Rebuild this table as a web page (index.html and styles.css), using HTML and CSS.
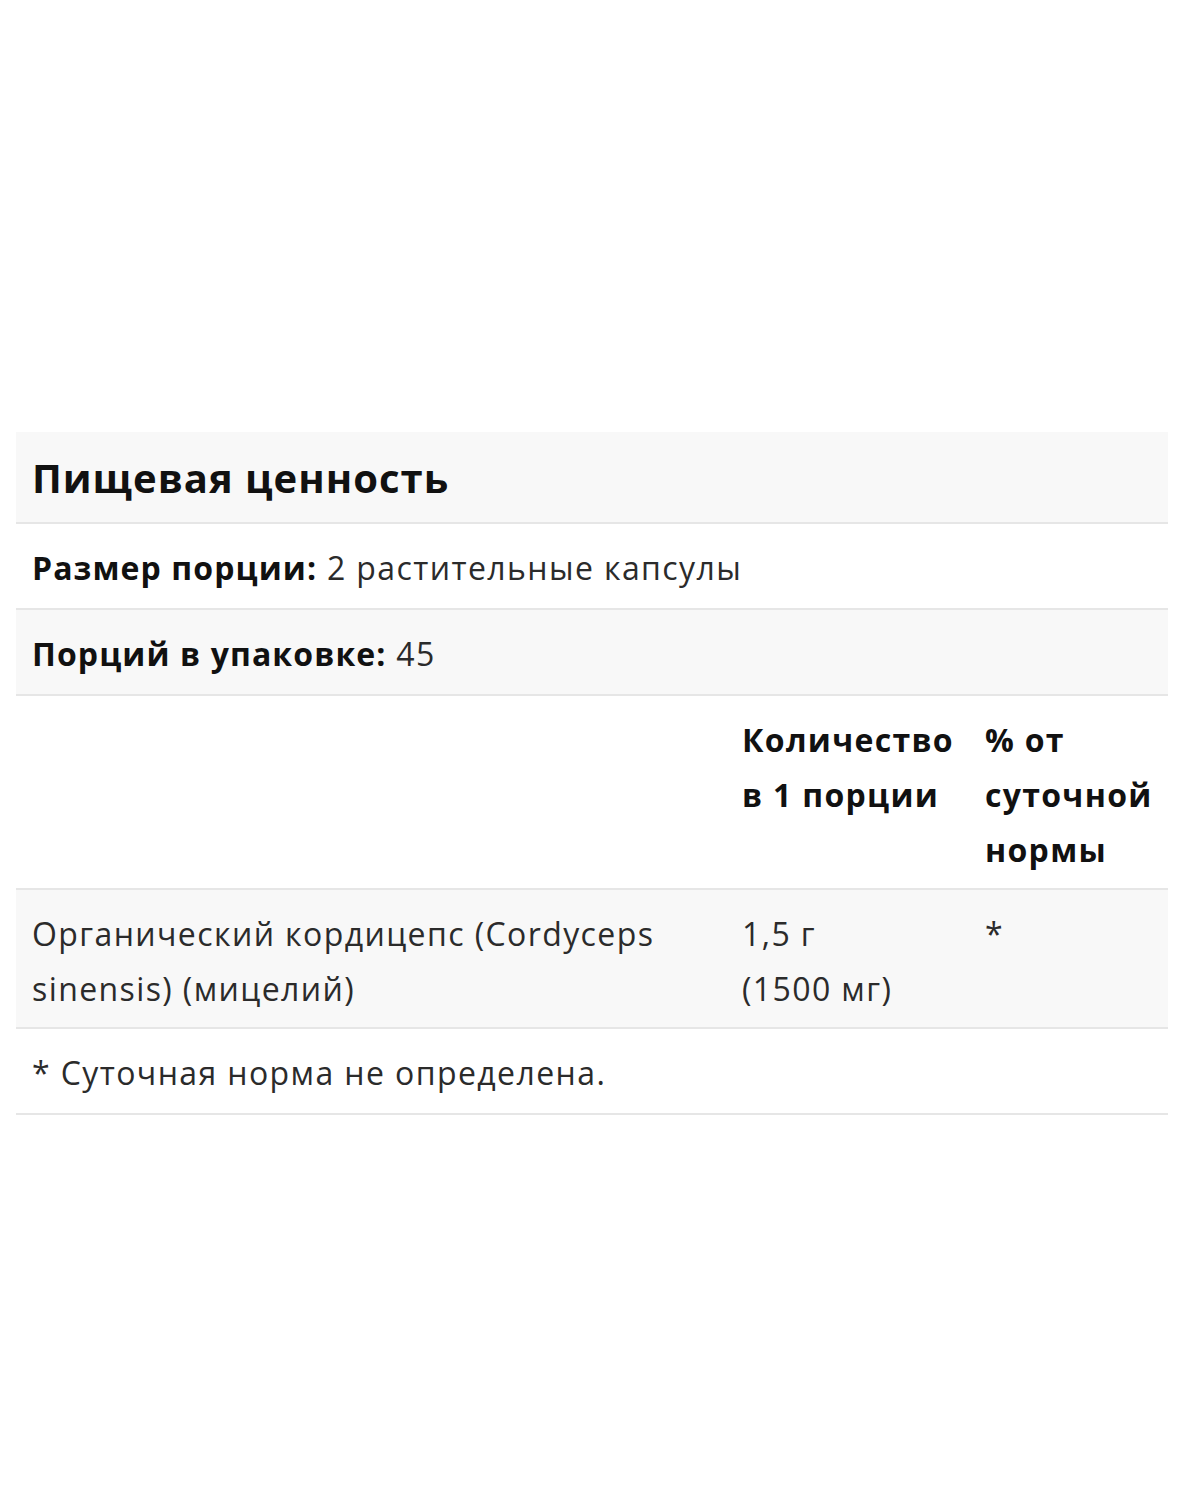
FILE: index.html
```html
<!DOCTYPE html>
<html lang="ru">
<head>
<meta charset="utf-8">
<link rel="stylesheet" href="styles.css">
</head>
<body>
<div class="facts">
  <div class="row title-row"><h2 class="title">Пищевая ценность</h2></div>
  <div class="row plain"><p><b>Размер порции:</b> 2 растительные капсулы</p></div>
  <div class="row shade"><p><b>Порций в упаковке:</b> 45</p></div>
  <div class="row grid plain head">
    <div class="c1"></div>
    <div class="c2">Количество в&nbsp;1 порции</div>
    <div class="c3">% от суточной нормы</div>
  </div>
  <div class="row grid shade">
    <div class="c1">Органический кордицепс (Cordyceps sinensis) (мицелий)</div>
    <div class="c2">1,5 г<br>(1500 мг)</div>
    <div class="c3">*</div>
  </div>
  <div class="row plain"><p>* Суточная норма не определена.</p></div>
</div>
</body>
</html>
```

FILE: styles.css
```css
html, body {
  margin: 0;
  padding: 0;
  background: #ffffff;
}
body {
  font-family: "Open Sans", "Noto Sans", sans-serif;
  color: #2b2b2b;
  font-size: 32px;
  line-height: 55px;
  letter-spacing: 1.4px;
}
.facts {
  margin: 432px 0 0 16px;
  width: 1152px;
}
.row {
  border-bottom: 2px solid #e6e6e6;
  padding: 16px 16px 13px;
}
.row p { margin: 0; }
.row b { color: #111111; font-weight: 700; letter-spacing: 1.1px; }
.title-row {
  background: #f8f8f8;
  padding: 18px 16px 17px;
}
.title {
  margin: 0;
  font-size: 40px;
  line-height: 55px;
  font-weight: 700;
  letter-spacing: 1px;
  color: #111111;
}
.shade { background: #f8f8f8; }
.plain { background: #ffffff; }
.grid {
  display: grid;
  grid-template-columns: 710px 243px 1fr;
  padding: 16px 0 11px;
}
.grid > div { padding-left: 16px; }
.head { font-weight: 700; color: #111111; letter-spacing: 1.3px; }
```
